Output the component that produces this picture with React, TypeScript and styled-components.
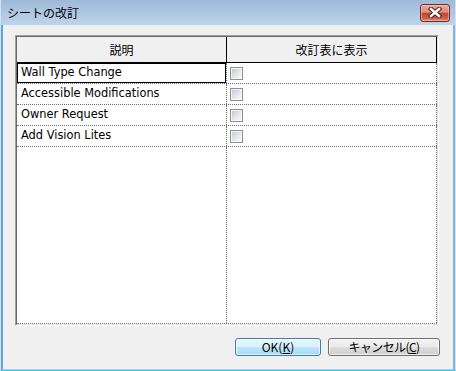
import styled, { createGlobalStyle } from "styled-components";

const GlobalStyle = createGlobalStyle`
  html, body {
    margin: 0;
    padding: 0;
    background: #ffffff;
  }
`;

const Window = styled.div`
  width: 456px;
  height: 371px;
  box-sizing: border-box;
  display: flex;
  flex-direction: column;
  background: #bcd3ea;
  border-left: 1px solid #d3e2f2;
  border-right: 1px solid #d3e2f2;
  border-bottom: 1px solid #2cc6ea;
  font-family: "Noto Sans CJK JP", "DejaVu Sans", sans-serif;
`;

const TitleBar = styled.div`
  height: 25px;
  flex-shrink: 0;
  display: flex;
  align-items: center;
  justify-content: space-between;
  padding: 0 5px 0 6px;
  background: linear-gradient(#9fb9d7, #bdd4eb);
`;

const Title = styled.span`
  font-size: 12px;
  color: #000;
  line-height: 14px;
`;

const CloseButton = styled.div`
  width: 30px;
  height: 18px;
  box-sizing: border-box;
  border: 1px solid #6f2b25;
  border-radius: 3px;
  display: flex;
  align-items: center;
  justify-content: center;
  background: linear-gradient(
    #e9a899 0%,
    #dc8d7b 45%,
    #c54730 52%,
    #cf5a40 80%,
    #e08a6a 100%
  );
  box-shadow: inset 0 0 0 1px rgba(255, 220, 210, 0.45);
`;

const Client = styled.div`
  flex: 1;
  display: flex;
  flex-direction: column;
  background: #f0f0f0;
  border-left: 2px solid #62a2e2;
  border-right: 2px solid #7fb4e6;
  border-bottom: 1px solid #b2d0ec;
  padding: 10px 13px 0 12px;
`;

/* sunken 3D frame round the grid */
const GridFrame = styled.div`
  width: 424px;
  height: 291px;
  box-sizing: border-box;
  border-top: 1px solid #a0a0a0;
  border-left: 1px solid #a0a0a0;
  border-right: 1px solid #ffffff;
  border-bottom: 1px solid #ffffff;
`;

const GridInner = styled.div`
  height: 100%;
  box-sizing: border-box;
  display: flex;
  flex-direction: column;
  border-top: 1px solid #696969;
  border-left: 1px solid #696969;
  border-right: 1px solid #e3e3e3;
  border-bottom: 1px solid #e3e3e3;
  background: #ffffff;
`;

const HeaderRow = styled.div`
  display: flex;
  height: 26px;
  flex-shrink: 0;
  box-sizing: border-box;
  border-bottom: 1px solid #000;
  background: #f0f0f0;
`;

const HeaderCell = styled.div`
  width: 210px;
  box-sizing: border-box;
  border-right: 1px solid #000;
  display: flex;
  align-items: center;
  justify-content: center;
  font-size: 12px;
  color: #000;
`;

const Row = styled.div<{ $fill?: boolean }>`
  display: flex;
  box-sizing: border-box;
  height: ${(p) => (p.$fill ? "auto" : "21px")};
  flex: ${(p) => (p.$fill ? "1" : "0 0 auto")};
  border-bottom: 1px dotted #6e6e6e;
`;

const Cell = styled.div<{ $focused?: boolean }>`
  width: 210px;
  box-sizing: border-box;
  border-right: 1px dotted #6e6e6e;
  display: flex;
  align-items: center;
  padding: 0 0 2px 4px;
  font-family: "DejaVu Sans", "Liberation Sans", sans-serif;
  font-size: 11.4px;
  color: #000;
  white-space: nowrap;
  box-shadow: ${(p) => (p.$focused ? "inset 0 0 0 1px #000" : "none")};
`;

const CheckCell = styled(Cell)`
  padding: 0 0 0 3px;
`;

const Check = styled.span`
  width: 13px;
  height: 13px;
  box-sizing: border-box;
  border: 1px solid #8f8f8f;
  padding: 1px;
  background: #f6f6f6;

  &::after {
    content: "";
    display: block;
    width: 100%;
    height: 100%;
    background: linear-gradient(135deg, #c3c8d1 0%, #e4e7eb 55%, #f7f7f7 100%);
  }
`;

const Footer = styled.div`
  display: flex;
  justify-content: flex-end;
  gap: 7px;
  margin-top: 12px;
`;

const Button = styled.div<{ $primary?: boolean; $w: number }>`
  width: ${(p) => p.$w}px;
  height: 18px;
  box-sizing: border-box;
  border: 1px solid ${(p) => (p.$primary ? "#3c7fb1" : "#707070")};
  border-radius: 3px;
  display: flex;
  align-items: center;
  justify-content: center;
  font-size: 12px;
  line-height: 14px;
  letter-spacing: ${(p) => (p.$primary ? "0" : "-0.6px")};
  color: #000;
  background: ${(p) =>
    p.$primary
      ? "linear-gradient(#eaf6fd 0%, #d9f0fc 50%, #bee6fd 50%, #a7d9f5 100%)"
      : "linear-gradient(#f2f2f2 0%, #ebebeb 50%, #dddddd 50%, #cfcfcf 100%)"};
  box-shadow: inset 0 0 0 1px rgba(255, 255, 255, 0.7);

  u {
    text-underline-offset: 1px;
  }
`;

const items = [
  "Wall Type Change",
  "Accessible Modifications",
  "Owner Request",
  "Add Vision Lites",
];

export default function App() {
  return (
    <>
      <GlobalStyle />
      <Window>
        <TitleBar>
          <Title>シートの改訂</Title>
          <CloseButton>
            <svg width="14" height="11" viewBox="0 0 14 11">
              <path
                d="M3 2 L11 9 M11 2 L3 9"
                stroke="#4a1a14"
                strokeWidth="4.4"
                strokeLinecap="square"
              />
              <path
                d="M3 2 L11 9 M11 2 L3 9"
                stroke="#ffffff"
                strokeWidth="2.6"
                strokeLinecap="square"
              />
            </svg>
          </CloseButton>
        </TitleBar>
        <Client>
          <GridFrame>
            <GridInner>
              <HeaderRow>
                <HeaderCell>説明</HeaderCell>
                <HeaderCell>改訂表に表示</HeaderCell>
              </HeaderRow>
              {items.map((label, i) => (
                <Row key={label}>
                  <Cell $focused={i === 0}>{label}</Cell>
                  <CheckCell>
                    <Check />
                  </CheckCell>
                </Row>
              ))}
              <Row $fill>
                <Cell />
                <Cell />
              </Row>
            </GridInner>
          </GridFrame>
          <Footer>
            <Button $primary $w={86}>
              OK(<u>K</u>)
            </Button>
            <Button $w={112}>
              キャンセル(<u>C</u>)
            </Button>
          </Footer>
        </Client>
      </Window>
    </>
  );
}
